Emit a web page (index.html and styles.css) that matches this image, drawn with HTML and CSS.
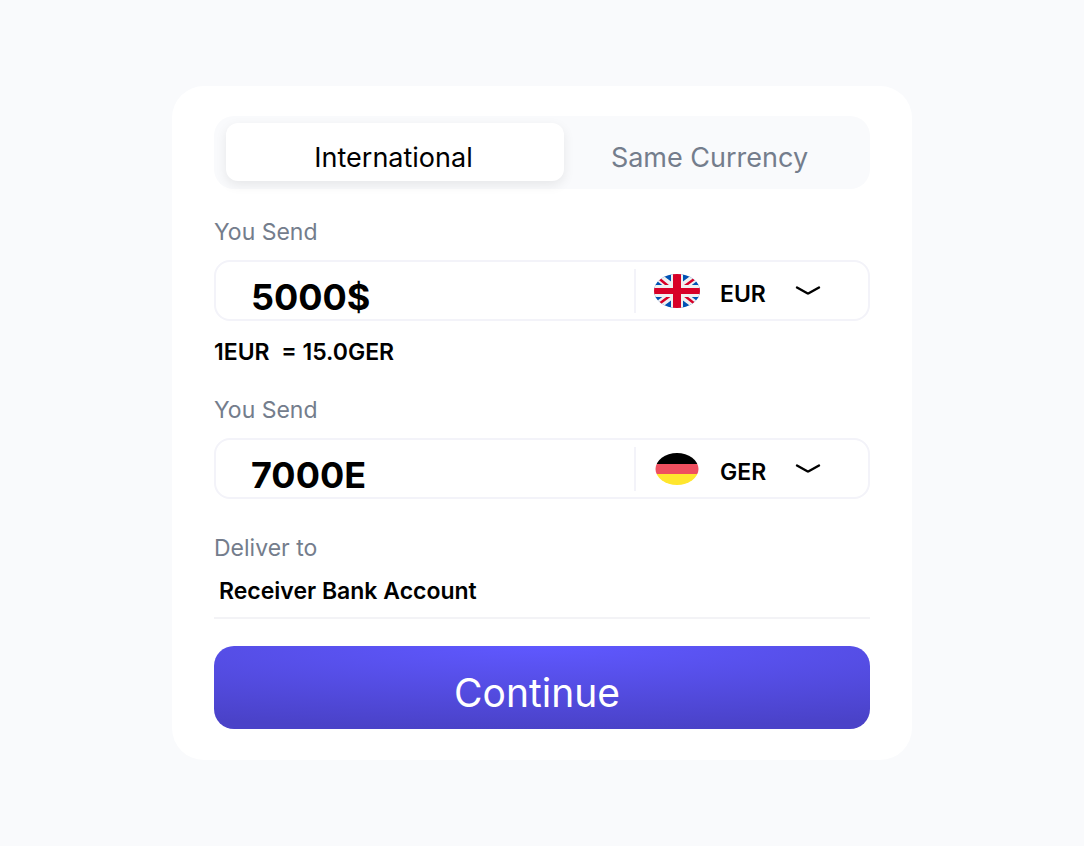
FILE: index.html
```html
<!DOCTYPE html>
<html lang="en">
<head>
  <meta charset="utf-8">
  <meta name="viewport" content="width=device-width, initial-scale=1">
  <title>Send money</title>
  <link rel="stylesheet" href="styles.css">
</head>
<body>
  <form class="card">
    <div class="tabs" role="tablist">
      <button class="tab tab-active" type="button" role="tab" aria-selected="true">International</button>
      <button class="tab" type="button" role="tab" aria-selected="false">Same Currency</button>
    </div>

    <div class="group">
      <label class="label" for="send">You Send</label>
      <div class="field">
        <input class="amount" id="send" type="text" value="5000$">
        <div class="currency">
          <svg class="flag" viewBox="0 0 46 34" aria-hidden="true">
            <defs>
              <clipPath id="oval"><ellipse cx="23" cy="17" rx="23" ry="17"/></clipPath>
            </defs>
            <g clip-path="url(#oval)">
              <path fill="#0052b4" d="M0 0h46v34H0z"/>
              <path stroke="#f0f0f0" stroke-width="8" d="M3 2l40 30M43 2L3 32"/>
              <path stroke="#d80027" stroke-width="2.4" d="M5 4.500l11 9M41 4.500L30 12.500M5 30l12-9M41 30L29 20.500"/>
              <path fill="#f0f0f0" d="M17 0h12v11h17v12H29v11H17V23H0V11h17z"/>
              <path fill="#d80027" d="M19 0h8v14h19v6H27v14h-8V20H0v-6h19z"/>
            </g>
          </svg>
          <div class="picker">
            <select class="select" aria-label="Send currency">
              <option>EUR</option>
              <option>GER</option>
            </select>
            <svg class="chevron" viewBox="0 0 26 12" aria-hidden="true"><path d="M2 2.500l10.300 5.800q.7.400 1.400 0L24 2.500"/></svg>
          </div>
        </div>
      </div>
      <p class="rate">1EUR&nbsp; = 15.0GER</p>
    </div>

    <div class="group">
      <label class="label" for="receive">You Send</label>
      <div class="field">
        <input class="amount" id="receive" type="text" value="7000E">
        <div class="currency">
          <svg class="flag" viewBox="0 0 46 34" aria-hidden="true">
            <defs>
              <clipPath id="oval-small"><ellipse cx="23" cy="17" rx="21.500" ry="16"/></clipPath>
            </defs>
            <g clip-path="url(#oval-small)">
              <path fill="#000" d="M0 0h46v12H0z"/>
              <path fill="#ef4f5f" d="M0 12h46v10H0z"/>
              <path fill="#ffe62e" d="M0 22h46v12H0z"/>
            </g>
          </svg>
          <div class="picker">
            <select class="select" aria-label="Receive currency">
              <option>GER</option>
              <option>EUR</option>
            </select>
            <svg class="chevron" viewBox="0 0 26 12" aria-hidden="true"><path d="M2 2.500l10.300 5.800q.7.400 1.400 0L24 2.500"/></svg>
          </div>
        </div>
      </div>
    </div>

    <div class="group group-deliver">
      <label class="label" for="deliver">Deliver to</label>
      <input class="deliver" id="deliver" type="text" value="Receiver Bank Account">
    </div>

    <button class="submit" type="submit">Continue</button>
  </form>
</body>
</html>
```

FILE: styles.css
```css
* {
  box-sizing: border-box;
}

body {
  margin: 0;
  min-height: 100vh;
  display: flex;
  align-items: center;
  justify-content: center;
  background: #f9fafc;
  color: #000;
  font-family: Inter, "Liberation Sans", sans-serif;
  font-size: 23px;
  line-height: 30px;
}

button,
input,
select {
  margin: 0;
  border: 0;
  padding: 0;
  background: none;
  color: inherit;
  font: inherit;
}

button {
  cursor: pointer;
}

.card {
  width: 100%;
  max-width: 740px;
  padding: 30px 42px 31px;
  border-radius: 32px;
  background: #fff;
}

.tabs {
  display: grid;
  grid-template-columns: 338fr 294fr;
  padding: 7px 12px 8px;
  border-radius: 20px;
  background: #f9fafc;
}

.tab {
  height: 58px;
  padding: 12px 3px 0 0;
  border-radius: 12px;
  color: #747d8c;
  font-size: 27px;
}

.tab-active {
  background: #fff;
  color: #000;
  box-shadow: 0 4px 12px rgba(0, 0, 0, 0.08);
}

.group {
  display: flex;
  flex-direction: column;
  margin-top: 28px;
}

.label {
  margin-bottom: 13px;
  color: #747d8c;
}

.field {
  display: flex;
  align-items: center;
  height: 61px;
  border: 2px solid #f3f3f9;
  border-radius: 16px;
}

.amount {
  flex: 1;
  min-width: 0;
  height: 57px;
  padding: 12px 0 0 35px;
  font-size: 36px;
  font-weight: 700;
}

.currency {
  display: flex;
  align-items: center;
  gap: 20px;
  height: 44px;
  padding-left: 18px;
  border-left: 2px solid #f3f3f9;
}

.flag {
  width: 46px;
  height: 34px;
}

.picker {
  position: relative;
}

.select {
  appearance: none;
  display: block;
  width: 148px;
  height: 44px;
  padding-top: 6px;
  font-weight: 600;
}

.chevron {
  position: absolute;
  top: 16px;
  right: 47px;
  width: 26px;
  height: 12px;
  fill: none;
  stroke: #000;
  stroke-width: 2.4;
  stroke-linecap: round;
  pointer-events: none;
}

.rate {
  margin: 16px 0 0;
  font-weight: 600;
}

.group-deliver {
  margin-top: 34px;
}

.group-deliver .label {
  margin-bottom: 8px;
}

.deliver {
  width: 100%;
  height: 48px;
  padding: 0 5px 6px;
  border-bottom: 2px solid #f3f3f6;
  font-weight: 600;
}

.submit {
  width: 100%;
  height: 83px;
  margin-top: 27px;
  padding: 10px 10px 0 0;
  border-radius: 20px;
  background: radial-gradient(ellipse 110% 100% at 50% 0, #5f58ff, #4a42c8);
  color: #fff;
  font-size: 39px;
}
```
